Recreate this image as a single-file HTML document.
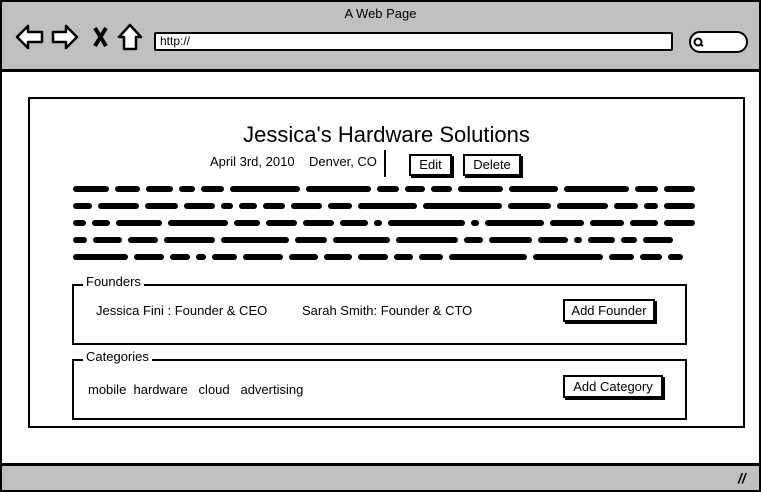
<!DOCTYPE html>
<html><head><style>
*{margin:0;padding:0;box-sizing:border-box}
body{width:761px;height:492px;position:relative;background:#fff;font-family:"Liberation Sans",sans-serif;color:#000;overflow:hidden}
.a{position:absolute}
.b{border:2px solid #000}
.btn{position:absolute;background:#fff;border:2px solid #000;box-shadow:2px 2px 0 #000;font-size:13px;text-align:center}
.ln{position:absolute;left:73px;width:622px;height:7px;display:flex;gap:6px}
.ln i{display:block;height:6px;background:#000;border-radius:3px}
.leg{position:absolute;background:#fff;font-size:13px;padding:0 3px}
</style></head><body>
<div class="a b" style="left:0;top:0;width:761px;height:492px;"></div>
<div class="a" style="left:2px;top:2px;width:757px;height:70px;background:#c0c0c0;border-bottom:3px solid #000"></div>
<div class="a" style="left:0;top:6px;width:761px;text-align:center;font-size:13px">A Web Page</div>
<svg class="a" style="left:14px;top:22px" width="130" height="30" viewBox="0 0 130 30" fill="#fff" stroke="#000" stroke-width="2.5" stroke-linejoin="round">
<path d="M3 15 L14 4 L14 10 L28 10 L28 20 L14 20 L14 26 Z"/>
<path d="M63 15 L52 4 L52 10 L39 10 L39 20 L52 20 L52 26 Z"/>
<path d="M81 6 L92 24 M92 6 L81 24" stroke-width="4"/>
<path d="M116 3 L105 15 L110 15 L110 27 L122 27 L122 15 L127 15 Z"/>
</svg>
<div class="a b" style="left:154px;top:32px;width:519px;height:19px;background:#fff;font-size:12px;padding-left:4px;line-height:15px;border-radius:2px">http://</div>
<div class="a b" style="left:689px;top:31px;width:59px;height:22px;background:#fff;border-radius:11px"></div>
<svg class="a" style="left:692px;top:36px" width="14" height="12"><circle cx="6" cy="6" r="3.5" fill="none" stroke="#000" stroke-width="2"/><path d="M8 8 L11 10" stroke="#000" stroke-width="2"/></svg>
<div class="a" style="left:2px;top:463px;width:757px;height:27px;background:#c0c0c0;border-top:3px solid #000"></div>
<div class="a" style="left:738px;top:470px;font-size:14px;font-weight:bold;font-style:italic">//</div>
<div class="a b" style="left:28px;top:97px;width:717px;height:331px"></div>
<div class="a" style="left:0;top:122px;width:773px;text-align:center;font-size:22px">Jessica's Hardware Solutions</div>
<div class="a" style="left:210px;top:154px;font-size:13px">April 3rd, 2010&nbsp;&nbsp;&nbsp; Denver, CO</div>
<div class="a" style="left:384px;top:150px;width:2px;height:27px;background:#000"></div>
<div class="btn" style="left:409px;top:154px;width:43px;height:22px;line-height:18px">Edit</div>
<div class="btn" style="left:463px;top:154px;width:58px;height:22px;line-height:18px">Delete</div>
<div class="ln" style="top:186px"><i style="flex:32"></i><i style="flex:22"></i><i style="flex:24"></i><i style="flex:15"></i><i style="flex:20"></i><i style="flex:62"></i><i style="flex:58"></i><i style="flex:20"></i><i style="flex:18"></i><i style="flex:18"></i><i style="flex:40"></i><i style="flex:44"></i><i style="flex:58"></i><i style="flex:20"></i><i style="flex:28"></i></div>
<div class="ln" style="top:203px"><i style="flex:16"></i><i style="flex:34"></i><i style="flex:28"></i><i style="flex:26"></i><i style="flex:10"></i><i style="flex:15"></i><i style="flex:18"></i><i style="flex:26"></i><i style="flex:20"></i><i style="flex:50"></i><i style="flex:66"></i><i style="flex:36"></i><i style="flex:42"></i><i style="flex:20"></i><i style="flex:12"></i><i style="flex:26"></i></div>
<div class="ln" style="top:220px"><i style="flex:10"></i><i style="flex:14"></i><i style="flex:36"></i><i style="flex:46"></i><i style="flex:20"></i><i style="flex:24"></i><i style="flex:24"></i><i style="flex:22"></i><i style="flex:6"></i><i style="flex:60"></i><i style="flex:6"></i><i style="flex:46"></i><i style="flex:26"></i><i style="flex:26"></i><i style="flex:22"></i><i style="flex:24"></i></div>
<div class="ln" style="top:237px;width:600px"><i style="flex:10"></i><i style="flex:22"></i><i style="flex:22"></i><i style="flex:38"></i><i style="flex:50"></i><i style="flex:24"></i><i style="flex:42"></i><i style="flex:46"></i><i style="flex:14"></i><i style="flex:32"></i><i style="flex:22"></i><i style="flex:6"></i><i style="flex:20"></i><i style="flex:12"></i><i style="flex:22"></i></div>
<div class="ln" style="top:254px;width:610px"><i style="flex:44"></i><i style="flex:24"></i><i style="flex:16"></i><i style="flex:8"></i><i style="flex:20"></i><i style="flex:32"></i><i style="flex:24"></i><i style="flex:22"></i><i style="flex:24"></i><i style="flex:15"></i><i style="flex:20"></i><i style="flex:62"></i><i style="flex:56"></i><i style="flex:20"></i><i style="flex:18"></i><i style="flex:12"></i></div>
<div class="a b" style="left:72px;top:284px;width:615px;height:61px"></div>
<div class="leg" style="left:83px;top:274px">Founders</div>
<div class="a" style="left:96px;top:303px;font-size:13px">Jessica Fini : Founder &amp; CEO</div>
<div class="a" style="left:302px;top:303px;font-size:13px">Sarah Smith: Founder &amp; CTO</div>
<div class="btn" style="left:563px;top:299px;width:92px;height:23px;line-height:19px">Add Founder</div>
<div class="a b" style="left:72px;top:359px;width:615px;height:61px"></div>
<div class="leg" style="left:83px;top:349px">Categories</div>
<div class="a" style="left:88px;top:382px;font-size:13px">mobile&nbsp; hardware&nbsp;&nbsp; cloud&nbsp;&nbsp; advertising</div>
<div class="btn" style="left:563px;top:375px;width:100px;height:23px;line-height:19px">Add Category</div>
</body></html>
